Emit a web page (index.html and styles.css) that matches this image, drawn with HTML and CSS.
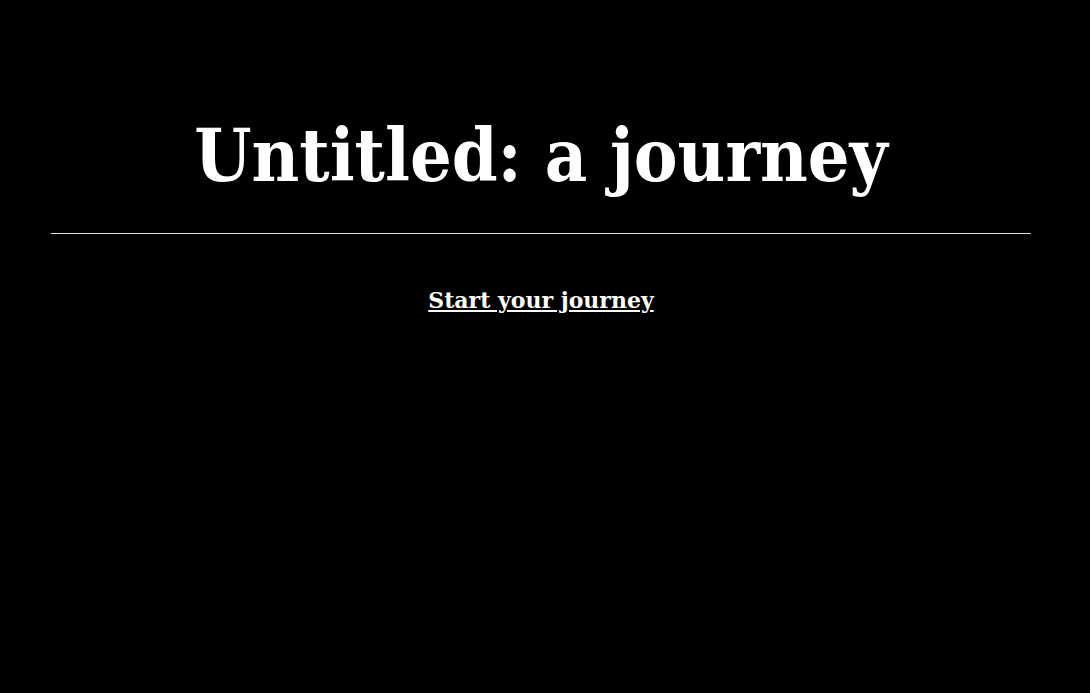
FILE: index.html
```html
<!DOCTYPE html>
<html lang="en">
<head>
    <meta charset="UTF-8">
    <meta name="viewport" content="width=device-width, initial-scale=1.0">
    <title>Untitled: a journey</title>
    <link rel="stylesheet" href="styles.css">
</head>
<body>
    <div class="page">
        <h1 class="title">Untitled: a journey</h1>
        <hr class="divider">
        <p class="start">
            <a href="#" class="start-link">Start your journey</a>
        </p>
    </div>
</body>
</html>
```
FILE: styles.css
```css
/* base */
body {
    margin: 0;
    padding: 0 8px 0 0;
    background-color: #000;
    color: #fff;
    font-family: "DejaVu Serif", "Liberation Serif", serif;
}

.page {
    width: 980px;
    margin: 0 auto;
    padding-top: 111px;
}

/* heading */
.title {
    margin: 0;
    font-family: "DejaVu Serif Condensed", "DejaVu Serif", serif;
    font-stretch: condensed;
    font-size: 73px;
    line-height: 88px;
    font-weight: bold;
    text-align: center;
}

.divider {
    margin: 34px 0 0;
    border: 0;
    height: 1px;
    background-color: #e2e2e2;
}

/* start link */
.start {
    margin: 53px 0 0;
    text-align: center;
    font-size: 22px;
    line-height: 26px;
}

.start-link {
    color: #fff;
    font-weight: bold;
    text-decoration: underline;
}
```
